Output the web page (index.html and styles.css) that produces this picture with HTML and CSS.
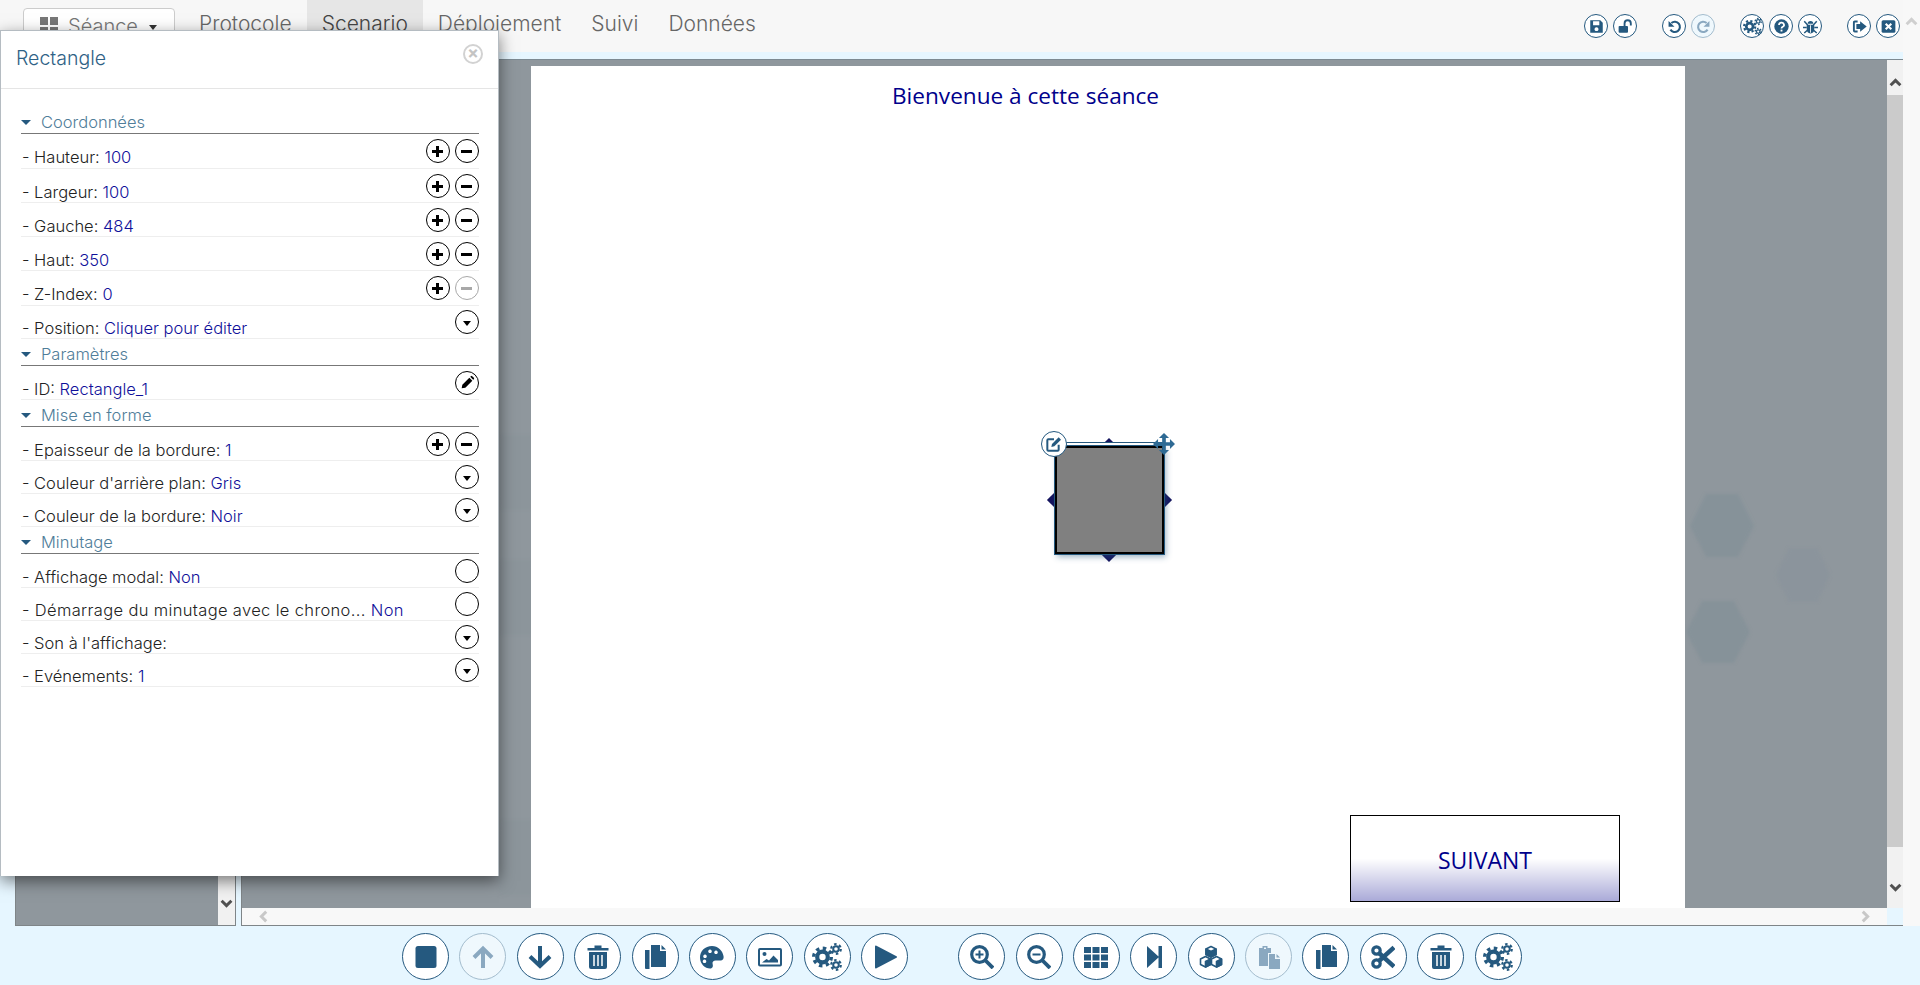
FILE: index.html
```html
<!DOCTYPE html>
<html lang="fr">
  <head>
    <meta charset="UTF-8" />
    <title>Scenario</title>
    <link rel="stylesheet" href="styles.css">
  </head>
  <body>
    <!-- Icon sheet -->
    <svg class="sheet" xmlns="http://www.w3.org/2000/svg">
      <symbol id="i-save" viewBox="0 0 24 24"><path fill-rule="evenodd" d="M2 2h16l4 4v16H2zM6.500 3.500V10h10V3.500zM12 13a3.200 3.200 0 1 0 .01 0z"/></symbol>
      <symbol id="i-unlock" viewBox="0 0 24 24"><rect x="1" y="11" width="15" height="11" rx="1.500"/><path d="M10.500 11V7a5 5 0 0 1 10 0v3.500" fill="none" stroke="currentColor" stroke-width="3"/></symbol>
      <symbol id="i-undo" viewBox="0 0 24 24"><path d="M7 6.500a8.200 8.200 0 1 1-1.500 10.500" fill="none" stroke="currentColor" stroke-width="3.400"/><path d="M2.500 3v9.500h9.500z"/></symbol>
      <symbol id="i-redo" viewBox="0 0 24 24"><path d="M17 6.500a8.200 8.200 0 1 0 1.500 10.500" fill="none" stroke="currentColor" stroke-width="3.400"/><path d="M21.500 3v9.500H12z"/></symbol>
      <symbol id="i-gears" viewBox="0 0 30 30">
        <g fill="none" stroke="currentColor">
          <circle cx="10.500" cy="15" r="5.300" stroke-width="4.200"/>
          <circle cx="10.500" cy="15" r="8.800" stroke-width="3.400" stroke-dasharray="3.450 3.460"/>
          <circle cx="24" cy="7" r="2.800" stroke-width="2"/>
          <circle cx="24" cy="7" r="4.800" stroke-width="2.200" stroke-dasharray="2.500 2.530"/>
          <circle cx="24" cy="23" r="2.800" stroke-width="2"/>
          <circle cx="24" cy="23" r="4.800" stroke-width="2.200" stroke-dasharray="2.500 2.530"/>
        </g>
      </symbol>
      <symbol id="i-help" viewBox="0 0 24 24"><circle cx="12" cy="12" r="11.500"/><path d="M8 9.500a4 3.600 0 1 1 6 3c-1.300.7-2 1.300-2 2.500" fill="none" stroke="#fff" stroke-width="2.800"/><rect x="10.500" y="17" width="3" height="3" fill="#fff"/></symbol>
      <symbol id="i-bug" viewBox="0 0 24 24"><path d="M7.500 7.500a4.500 4.500 0 0 1 9 0zM6 9h12v7a6 7 0 0 1-12 0z"/><path d="M2 3.500l5.500 6M22 3.500l-5.500 6M0 13.500h6M24 13.500h-6M2 22.500l5.500-5M22 22.500l-5.500-5" fill="none" stroke="currentColor" stroke-width="2.400"/><path d="M12 10v12" stroke="#fff" stroke-width="1.400"/></symbol>
      <symbol id="i-exit" viewBox="0 0 24 24"><path d="M9 4H4.500A1.500 1.500 0 0 0 3 5.500v13A1.500 1.500 0 0 0 4.500 20H9" fill="none" stroke="currentColor" stroke-width="3"/><path d="M13 3.500l10.500 8.500L13 20.500V16H7V8h6z"/></symbol>
      <symbol id="i-closebox" viewBox="0 0 24 24"><rect x="1" y="2" width="22" height="20" rx="2.500"/><path d="M7.500 7.500l9 9M16.500 7.500l-9 9" stroke="#fff" stroke-width="3.400"/></symbol>
      <symbol id="i-stop" viewBox="0 0 24 24"><rect x="1.500" y="1" width="21" height="22" rx="2.500"/></symbol>
      <symbol id="i-up" viewBox="0 0 24 24"><path d="M12 23V4M3 12.500L12 3.500l9 9" fill="none" stroke="currentColor" stroke-width="4"/></symbol>
      <symbol id="i-down" viewBox="0 0 24 24"><path d="M12 1v19M2 11.500l10 9.500 10-9.500" fill="none" stroke="currentColor" stroke-width="4"/></symbol>
      <symbol id="i-trash" viewBox="0 0 24 24"><path d="M1.500 3h7V0.500h7V3h7v2.500h-21zM3 7h18v15a2 2 0 0 1-2 2H5a2 2 0 0 1-2-2z"/><path d="M8 10v11M12 10v11M16 10v11" stroke="#fff" stroke-width="1.500"/></symbol>
      <symbol id="i-copy" viewBox="0 0 24 24"><path d="M8 0h9v6h6v16H8z"/><path d="M18.500 0L23 4.500h-4.500z"/><path d="M2 5h4.500v19H17v0H3a1 1 0 0 1-1-1z"/></symbol>
      <symbol id="i-palette" viewBox="0 0 24 24"><path fill-rule="evenodd" d="M12 1C5 1 0 6 0 12.500S5 23.500 10 23.500c3 0 3.200-2.500 2.600-4.500-.6-2 1-3.500 3-3.500H20c3 0 4-2 3.500-4.500C22.500 5.500 18 1 12 1zM5 9.500a1.800 1.800 0 1 0 .01 0zM10 4.500a1.800 1.800 0 1 0 .01 0zM16 5.500a1.800 1.800 0 1 0 .01 0zM4.500 14.500a1.800 1.800 0 1 0 .01 0z"/></symbol>
      <symbol id="i-image" viewBox="0 0 24 24"><rect x="1" y="4" width="22" height="16.500" rx="1" fill="none" stroke="currentColor" stroke-width="2"/><circle cx="6.500" cy="9" r="2"/><path d="M4 17.500l4.500-3.500 2.500 1.500 4.500-5 4.500 4.500v2.500z"/></symbol>
      <symbol id="i-play" viewBox="0 0 24 24"><path d="M2 1.500a1 1 0 0 1 1.500-.8l20 10.500a1 1 0 0 1 0 1.600l-20 10.500a1 1 0 0 1-1.500-.8z"/></symbol>
      <symbol id="i-zoomin" viewBox="0 0 24 24"><circle cx="9.500" cy="9.500" r="7.800" fill="none" stroke="currentColor" stroke-width="3.200"/><path d="M15.500 15.500l7.500 7.500" stroke="currentColor" stroke-width="3.800"/><path d="M5.500 9.500h8M9.500 5.500v8" stroke="currentColor" stroke-width="2"/></symbol>
      <symbol id="i-zoomout" viewBox="0 0 24 24"><circle cx="9.500" cy="9.500" r="7.800" fill="none" stroke="currentColor" stroke-width="3.200"/><path d="M15.500 15.500l7.500 7.500" stroke="currentColor" stroke-width="3.800"/><path d="M5.500 9.500h8" stroke="currentColor" stroke-width="2"/></symbol>
      <symbol id="i-grid" viewBox="0 0 24 24"><path d="M0 2h7v6H0zM8.500 2h7v6h-7zM17 2h7v6h-7zM0 9.500h7v6H0zM8.500 9.500h7v6h-7zM17 9.500h7v6h-7zM0 17h7v6H0zM8.500 17h7v6h-7zM17 17h7v6h-7z"/></symbol>
      <symbol id="i-step" viewBox="0 0 24 24"><path d="M5 1l12 11L5 23zM16.500 1h3.500v22h-3.500z"/></symbol>
      <symbol id="i-cubes" viewBox="0 0 24 24">
        <g stroke="currentColor" stroke-width="1.600" stroke-linejoin="round">
          <path d="M12 1.500l5 2.500v5.500l-5 2.500-5-2.500V4z" fill="#fff"/><path d="M12 6.500L17 4v5.500L12 12z"/><path d="M7 4l5 2.500V12L7 9.500z"/>
          <path d="M6.500 11.500l5 2.500v5.500l-5 2.500-5-2.500V14z" fill="#fff"/><path d="M6.500 16.500l5-2.500v5.500l-5 2.500z"/>
          <path d="M17.500 11.500l5 2.500v5.500l-5 2.500-5-2.500V14z" fill="#fff"/><path d="M17.500 16.500l5-2.500v5.500l-5 2.500z"/>
        </g>
      </symbol>
      <symbol id="i-paste" viewBox="0 0 24 24"><path fill-rule="evenodd" d="M2 3h3.500V1h5v2H14v5h-3v13H2zM7 2.500h2v1.500H7z"/><path d="M12 9h6v5h5v10H12z"/><path d="M19.500 9l3.500 3.500h-3.500z"/></symbol>
      <symbol id="i-scissors" viewBox="0 0 24 24"><g fill="none" stroke="currentColor"><circle cx="5.500" cy="5.500" r="3.700" stroke-width="3.200"/><circle cx="5.500" cy="18.500" r="3.700" stroke-width="3.200"/><path d="M8 8l15 13.500M8 16L23 2.500" stroke-width="4.400"/></g></symbol>
      <symbol id="i-edit" viewBox="0 0 24 24"><path d="M12 5H3.500A1.500 1.500 0 0 0 2 6.500v14A1.500 1.500 0 0 0 3.500 22h14a1.500 1.500 0 0 0 1.500-1.500V13" fill="none" stroke="currentColor" stroke-width="3"/><path d="M9 12L19 2l3.500 3.500-10 10L8 16.500z"/></symbol>
      <symbol id="i-move" viewBox="0 0 24 24"><path d="M12 0l5.500 5.500h-3.500v4.500h4.500V6.500L24 12l-5.500 5.500V14H14v4.500h3.500L12 24l-5.500-5.500H10V14H5.500v3.500L0 12l5.500-5.500V10H10V5.500H6.500z"/></symbol>
      <symbol id="i-pencil" viewBox="0 0 24 24"><path d="M4 20l1-5.500L15.500 4l4.500 4.500L9.500 19zM16.800 2.700l1-1a1.500 1.500 0 0 1 2 0l2.500 2.500a1.500 1.500 0 0 1 0 2l-1 1z"/></symbol>
      <symbol id="i-chev" viewBox="0 0 24 24"><path d="M3 17l9-9 9 9" fill="none" stroke="currentColor" stroke-width="5.500"/></symbol>
    </svg>

    <div class="top">
      <div class="app">
        <!-- Menu -->
        <header class="menu">
          <button class="session">
            <svg class="session-grid" viewBox="0 0 18 18"><path d="M0 0h8v8H0zM10 0h8v8h-8zM0 10h8v8H0zM10 10h8v8h-8z"/></svg>
            Séance
            <span class="caret"></span>
          </button>
          <nav class="tabs">
            <a class="tab">Protocole</a>
            <a class="tab active">Scenario</a>
            <a class="tab">Déploiement</a>
            <a class="tab">Suivi</a>
            <a class="tab">Données</a>
          </nav>
          <div class="tools">
            <div class="tool-group">
              <span class="rb-sm"><svg><use href="#i-save"/></svg></span>
              <span class="rb-sm"><svg><use href="#i-unlock"/></svg></span>
            </div>
            <div class="tool-group">
              <span class="rb-sm"><svg><use href="#i-undo"/></svg></span>
              <span class="rb-sm off"><svg><use href="#i-redo"/></svg></span>
            </div>
            <div class="tool-group">
              <span class="rb-sm"><svg class="gears"><use href="#i-gears"/></svg></span>
              <span class="rb-sm"><svg><use href="#i-help"/></svg></span>
              <span class="rb-sm"><svg><use href="#i-bug"/></svg></span>
            </div>
            <div class="tool-group">
              <span class="rb-sm"><svg><use href="#i-exit"/></svg></span>
              <span class="rb-sm"><svg><use href="#i-closebox"/></svg></span>
            </div>
          </div>
        </header>
        <div class="strip"></div>

        <div class="work">
          <!-- Slide list -->
          <aside class="side">
            <div class="side-list"></div>
            <div class="vscroll side-scroll">
              <svg class="chev chev-down"><use href="#i-chev"/></svg>
            </div>
          </aside>

          <!-- Canvas -->
          <section class="editor">
            <div class="editor-top">
              <div class="canvas">
                <svg class="hexes" viewBox="0 0 1645 866">
                  <polygon class="hex" points="1464,434 1496,434 1512,466 1496,497 1464,497 1448,466"/>
                  <polygon class="hex hex-light" points="1547,488 1575,488 1588,515 1575,542 1547,542 1534,515"/>
                  <polygon class="hex" points="1460,541 1492,541 1508,572 1492,603 1460,603 1444,572"/>
                  <polygon class="hex hex-faint" points="258,375 290,375 302,416 290,450 258,450 250,416"/>
                  <polygon class="hex hex-faint" points="258,500 290,500 302,539 290,575 258,575 250,539"/>
                  <polygon class="hex hex-faint" points="258,760 290,760 302,800 290,835 258,835 250,800"/>
                </svg>
                <div class="stage">
                  <div class="stage-title">Bienvenue à cette séance</div>
                  <div class="shape">
                    <i class="grip grip-t"></i><i class="grip grip-l"></i><i class="grip grip-r"></i><i class="grip grip-b"></i>
                    <span class="shape-edit"><svg><use href="#i-edit"/></svg></span>
                    <svg class="shape-move"><use href="#i-move"/></svg>
                  </div>
                  <div class="next">SUIVANT</div>
                </div>
              </div>
              <div class="vscroll main-scroll">
                <div class="vscroll-head"><svg class="chev"><use href="#i-chev"/></svg></div>
                <div class="vscroll-thumb"></div>
                <div class="vscroll-foot"><svg class="chev chev-down"><use href="#i-chev"/></svg></div>
              </div>
            </div>
            <div class="hscroll">
              <svg class="chev chev-left"><use href="#i-chev"/></svg>
              <svg class="chev chev-right"><use href="#i-chev"/></svg>
            </div>
          </section>
        </div>
      </div>
      <div class="gutter"><svg class="chev chev-page"><use href="#i-chev"/></svg></div>
    </div>

    <!-- Bottom toolbar -->
    <footer class="bar">
      <div class="bar-group">
        <span class="rb"><svg><use href="#i-stop"/></svg></span>
        <span class="rb off"><svg><use href="#i-up"/></svg></span>
        <span class="rb"><svg><use href="#i-down"/></svg></span>
        <span class="rb"><svg><use href="#i-trash"/></svg></span>
        <span class="rb"><svg><use href="#i-copy"/></svg></span>
        <span class="rb"><svg><use href="#i-palette"/></svg></span>
        <span class="rb"><svg><use href="#i-image"/></svg></span>
        <span class="rb"><svg class="gears"><use href="#i-gears"/></svg></span>
        <span class="rb"><svg><use href="#i-play"/></svg></span>
      </div>
      <div class="bar-group">
        <span class="rb"><svg><use href="#i-zoomin"/></svg></span>
        <span class="rb"><svg><use href="#i-zoomout"/></svg></span>
        <span class="rb"><svg><use href="#i-grid"/></svg></span>
        <span class="rb"><svg><use href="#i-step"/></svg></span>
        <span class="rb"><svg><use href="#i-cubes"/></svg></span>
        <span class="rb off"><svg><use href="#i-paste"/></svg></span>
        <span class="rb"><svg><use href="#i-copy"/></svg></span>
        <span class="rb"><svg><use href="#i-scissors"/></svg></span>
        <span class="rb"><svg><use href="#i-trash"/></svg></span>
        <span class="rb"><svg class="gears"><use href="#i-gears"/></svg></span>
      </div>
    </footer>

    <!-- Properties dialog -->
    <div class="dialog">
      <div class="dialog-head">
        <h4>Rectangle</h4>
        <span class="dialog-close">&times;</span>
      </div>
      <div class="dialog-body">
        <div class="group-title"><span class="tri"></span>Coordonnées</div>
        <div class="row tall"><span>- Hauteur: <b>100</b></span><span class="acts"><i class="pm plus"></i><i class="pm minus"></i></span></div>
        <div class="row"><span>- Largeur: <b>100</b></span><span class="acts"><i class="pm plus"></i><i class="pm minus"></i></span></div>
        <div class="row"><span>- Gauche: <b>484</b></span><span class="acts"><i class="pm plus"></i><i class="pm minus"></i></span></div>
        <div class="row"><span>- Haut: <b>350</b></span><span class="acts"><i class="pm plus"></i><i class="pm minus"></i></span></div>
        <div class="row tall"><span>- Z-Index: <b>0</b></span><span class="acts"><i class="pm plus"></i><i class="pm minus off"></i></span></div>
        <div class="row short"><span>- Position: <b>Cliquer pour éditer</b></span><span class="acts"><i class="pm drop"></i></span></div>

        <div class="group-title"><span class="tri"></span>Paramètres</div>
        <div class="row"><span>- ID: <b>Rectangle_1</b></span><span class="acts"><i class="pm"><svg><use href="#i-pencil"/></svg></i></span></div>

        <div class="group-title"><span class="tri"></span>Mise en forme</div>
        <div class="row"><span>- Epaisseur de la bordure: <b>1</b></span><span class="acts"><i class="pm plus"></i><i class="pm minus"></i></span></div>
        <div class="row short"><span>- Couleur d'arrière plan: <b>Gris</b></span><span class="acts"><i class="pm drop"></i></span></div>
        <div class="row short"><span>- Couleur de la bordure: <b>Noir</b></span><span class="acts"><i class="pm drop"></i></span></div>

        <div class="group-title"><span class="tri"></span>Minutage</div>
        <div class="row"><span>- Affichage modal: <b>Non</b></span><span class="acts"><i class="pm"></i></span></div>
        <div class="row short loose"><span>- Démarrage du minutage avec le chrono... <b>Non</b></span><span class="acts"><i class="pm"></i></span></div>
        <div class="row short"><span>- Son à l'affichage:</span><span class="acts"><i class="pm drop"></i></span></div>
        <div class="row short"><span>- Evénements: <b>1</b></span><span class="acts"><i class="pm drop"></i></span></div>
      </div>
    </div>
  </body>
</html>
```

FILE: styles.css
```css
* {
  box-sizing: border-box;
}
html,
body {
  height: 100%;
}
body {
  margin: 0;
  overflow: hidden;
  font-family: "Inter", "Open Sans", sans-serif;
  font-weight: 300;
  background-color: #e6f6ff;
  color: #25597f;
  position: relative;
}
.sheet {
  display: none;
}
.top {
  display: flex;
  height: 926px;
}
.app {
  width: 1903px;
  display: flex;
  flex-direction: column;
}
.gutter {
  flex: 1;
  background-color: #f8f8f8;
  padding-top: 15px;
}

/* Menu */
.menu {
  height: 52px;
  background-color: #f7f7f7;
  display: flex;
  padding-left: 23px;
  padding-right: 3px;
}
.session {
  width: 152px;
  height: 36px;
  margin: 8px 9px 0 0;
  padding: 0 0 0 16px;
  background-color: #fff;
  border: 1px solid #ccc;
  border-radius: 4px;
  color: #777;
  font-family: inherit;
  font-weight: 300;
  font-size: 20px;
  display: flex;
  align-items: center;
}
.session-grid {
  width: 18px;
  height: 18px;
  margin-right: 10px;
  fill: #777;
}
.caret {
  width: 0;
  height: 0;
  margin-left: 11px;
  margin-top: 3px;
  border-left: 4px solid transparent;
  border-right: 4px solid transparent;
  border-top: 5px solid #333;
}
.tabs {
  display: flex;
}
.tab {
  padding: 11px 15px 0;
  font-size: 21px;
  color: #666;
}
.tab.active {
  background-color: #e6e6e6;
  color: #444;
}
.tools {
  margin-left: auto;
  display: flex;
  gap: 25px;
  padding-top: 14px;
}
.tool-group {
  display: flex;
  gap: 5px;
}
.strip {
  height: 8px;
  background-color: #e6f6ff;
  border-bottom: 1px solid #7d8a92;
}

/* Round buttons */
.rb-sm,
.rb {
  display: flex;
  align-items: center;
  justify-content: center;
  background-color: #fff;
  border-radius: 50%;
  color: #25597f;
  fill: currentColor;
}
.rb-sm {
  width: 24px;
  height: 24px;
  border: 1.5px solid #25597f;
}
.rb-sm svg {
  width: 15px;
  height: 15px;
}
.rb-sm svg.gears {
  width: 19px;
  height: 19px;
}
.rb {
  width: 47px;
  height: 47px;
  border: 1.5px solid #25597f;
}
.rb svg {
  width: 24px;
  height: 24px;
}
.rb svg.gears {
  width: 30px;
  height: 30px;
}
.rb-sm.off,
.rb.off {
  color: #8aa8c0;
  fill: #8aa8c0;
  border-color: #a3bccd;
  background-color: #eff8fd;
}

/* Work area */
.work {
  flex: 1;
  display: flex;
  min-height: 0;
  padding-left: 15px;
  gap: 5px;
}
.side {
  width: 221px;
  display: flex;
  border: 1px solid #7f8588;
  border-top: none;
}
.side-list {
  flex: 1;
  background-color: #8f979d;
}
.vscroll {
  background-color: #f1f1f1;
}
.side-scroll {
  width: 17px;
  display: flex;
  align-items: flex-end;
  justify-content: center;
  padding-bottom: 15px;
}
.editor {
  flex: 1;
  display: flex;
  flex-direction: column;
  min-width: 0;
  border-left: 1px solid #7f8588;
  border-bottom: 1px solid #7f8588;
}
.editor-top {
  flex: 1;
  display: flex;
  min-height: 0;
}
.canvas {
  flex: 1;
  position: relative;
  background-color: #8f979d;
  padding: 6px 0 0 289px;
  overflow: hidden;
}
.hexes {
  position: absolute;
  left: 0;
  top: 0;
  width: 1645px;
  height: 866px;
  filter: blur(1.5px);
}
.hex {
  fill: #869299;
}
.hex-light {
  fill: #8b949c;
}
.hex-faint {
  fill: #8c959b;
}
.stage {
  position: relative;
  z-index: 0;
  width: 1154px;
  height: 100%;
  background-color: #fff;
}
.stage-title {
  position: absolute;
  left: 361px;
  top: 14px;
  font-family: "Open Sans", sans-serif;
  font-weight: 400;
  font-size: 22.6px;
  color: #00008b;
}
.shape {
  position: absolute;
  left: 524px;
  top: 380px;
  width: 109px;
  height: 108px;
  background-color: #808080;
  border: 2px solid #000;
  box-shadow: 0 0 0 1px #25597f, 0 -2px 0 1px #fff, 0 -3px 0 1px #25597f, 2px 3px 6px rgba(37, 89, 127, 0.45);
}
.grip {
  position: absolute;
  z-index: -1;
  width: 10px;
  height: 10px;
  background-color: #14145e;
  transform: rotate(45deg);
}
.grip-t {
  left: 47px;
  top: -8px;
}
.grip-b {
  left: 47px;
  bottom: -8px;
}
.grip-l {
  left: -8px;
  top: 47px;
}
.grip-r {
  right: -8px;
  top: 47px;
}
.shape-edit {
  position: absolute;
  left: -16px;
  top: -17px;
  width: 26px;
  height: 26px;
  border-radius: 50%;
  border: 1.5px solid #25597f;
  background-color: #fff;
  display: flex;
  align-items: center;
  justify-content: center;
  fill: #25597f;
  color: #25597f;
}
.shape-edit svg {
  width: 16px;
  height: 16px;
}
.shape-move {
  position: absolute;
  right: -13px;
  top: -15px;
  width: 22px;
  height: 22px;
  fill: #2e6a94;
}
.next {
  position: absolute;
  left: 819px;
  top: 749px;
  width: 270px;
  height: 87px;
  padding-top: 28px;
  border: 1px solid #000;
  background: linear-gradient(to bottom, #fff 50%, #aaaad8 100%);
  font-family: "Open Sans", sans-serif;
  font-weight: 400;
  font-size: 23px;
  color: #00008b;
  text-align: center;
}
.main-scroll {
  width: 16px;
  display: flex;
  flex-direction: column;
}
.vscroll-head {
  height: 35px;
  display: flex;
  align-items: flex-end;
  justify-content: center;
  padding-bottom: 6px;
}
.vscroll-thumb {
  height: 752px;
  background-color: #cbcbcb;
}
.vscroll-foot {
  flex: 1;
  display: flex;
  justify-content: center;
  padding-top: 34px;
}
.chev {
  width: 13px;
  height: 13px;
  color: #505050;
  fill: none;
}
.chev-down {
  transform: rotate(180deg);
}
.hscroll {
  height: 17px;
  background-color: #f8f8f8;
  display: flex;
  justify-content: space-between;
  align-items: center;
  padding: 0 15px 0 15px;
  margin-right: 16px;
}
.chev-left {
  transform: rotate(-90deg);
  color: #c8c8c8;
}
.chev-right {
  transform: rotate(90deg);
  color: #c8c8c8;
}
.chev-page {
  display: block;
  margin-left: 2px;
  color: #cfcfcf;
}

/* Bottom toolbar */
.bar {
  height: 59px;
  display: flex;
  gap: 50px;
  padding: 7px 0 0 402px;
}
.bar-group {
  display: flex;
  gap: 10.4px;
}

/* Properties dialog */
.dialog {
  position: absolute;
  left: 0;
  top: 30px;
  width: 499px;
  height: 846px;
  background-color: #fff;
  border: 1px solid #b5bcc2;
  border-width: 1px 1px 0 1px;
  box-shadow: 0 5px 15px rgba(0, 0, 0, 0.5);
  font-size: 16.5px;
  color: #222;
}
.dialog-head {
  height: 58px;
  border-bottom: 1px solid #e5e5e5;
  padding: 15px 15px;
  position: relative;
}
.dialog-head h4 {
  margin: 0;
  font-size: 19.5px;
  font-weight: 300;
  color: #2f6286;
}
.dialog-close {
  position: absolute;
  left: 462px;
  top: 13px;
  width: 20px;
  height: 20px;
  border: 2px solid #d2d2d2;
  border-radius: 50%;
  color: #c4c4c4;
  font-size: 17px;
  font-weight: 700;
  line-height: 15px;
  text-align: center;
}
.dialog-body {
  padding: 18px 19px 0 20px;
}
.group-title {
  height: 27px;
  border-bottom: 1px solid #777;
  padding-top: 5px;
  font-size: 16.5px;
  line-height: 21px;
  color: #4f7d99;
  display: flex;
  align-items: center;
}
.tri {
  width: 0;
  height: 0;
  margin-right: 10px;
  border-left: 5px solid transparent;
  border-right: 5px solid transparent;
  border-top: 5px solid #25597f;
}
.row {
  height: 34px;
  border-bottom: 1px solid #eee;
  padding: 0 0 0 1px;
  display: flex;
  justify-content: space-between;
  align-items: flex-end;
  line-height: 20px;
}
.row.short {
  height: 33px;
}
.row.tall {
  height: 35px;
  padding-bottom: 1px;
}
.row.tall .acts {
  margin-bottom: 4px;
}
.row.loose {
  letter-spacing: 0.35px;
}
.row b {
  font-weight: 300;
  color: #10109a;
}
.acts {
  display: flex;
  gap: 5px;
  margin-bottom: 4px;
}
.pm {
  position: relative;
  width: 24px;
  height: 24px;
  border: 1.5px solid #000;
  border-radius: 50%;
  display: flex;
  align-items: center;
  justify-content: center;
  fill: #000;
}
.pm svg {
  width: 16px;
  height: 16px;
}
.plus::before,
.plus::after,
.minus::before {
  content: "";
  position: absolute;
  left: 5px;
  top: 9.5px;
  width: 11px;
  height: 3px;
  background-color: #000;
}
.plus::after {
  left: 9px;
  top: 5.5px;
  width: 3px;
  height: 11px;
}
.pm.off {
  border-color: #a8a8a8;
}
.pm.off::before {
  background-color: #a8a8a8;
}
.drop::before {
  content: "";
  margin-top: 2px;
  border-left: 4px solid transparent;
  border-right: 4px solid transparent;
  border-top: 5px solid #000;
}
```
